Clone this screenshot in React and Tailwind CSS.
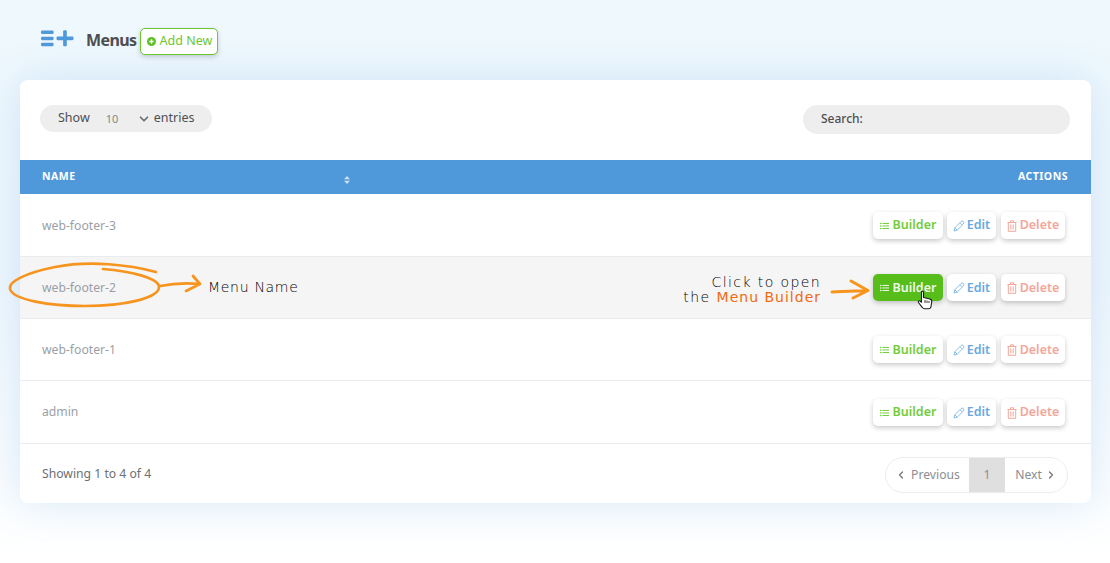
import React from "react";
import { ChevronDown, ChevronLeft, ChevronRight } from "lucide-react";

const ui = "font-['Noto_Sans',sans-serif]";

function ListIcon({ className }) {
  return (
    <svg viewBox="0 0 10 8" className={className} fill="currentColor">
      <rect x="0" y="0.5" width="1.6" height="1.4" />
      <rect x="0" y="3.3" width="1.6" height="1.4" />
      <rect x="0" y="6.1" width="1.6" height="1.4" />
      <rect x="2.6" y="0.6" width="7.4" height="1.1" />
      <rect x="2.6" y="3.4" width="7.4" height="1.1" />
      <rect x="2.6" y="6.2" width="7.4" height="1.1" />
    </svg>
  );
}

function PencilIcon() {
  return (
    <svg viewBox="0 0 12 12" className="w-[12px] h-[12px] text-[#7db8e8]" fill="none" stroke="currentColor" strokeWidth="0.9" strokeLinejoin="round">
      <path d="M1 11 L1.8 7.8 L8 1.6 A1.5 1.5 0 0 1 10.4 4 L4.2 10.2 Z" />
      <path d="M7 2.8 L9.2 5 M1.8 7.8 L4.2 10.2" />
    </svg>
  );
}

function TrashIcon() {
  return (
    <svg viewBox="0 0 10 12" className="w-[10px] h-[12px] text-[#f3a79a]" fill="none" stroke="currentColor" strokeWidth="1">
      <path d="M0.5 2.5 H9.5 M3.5 2.3 V0.8 H6.5 V2.3" />
      <path d="M1.3 2.6 V11.3 H8.7 V2.6" />
      <path d="M3.5 4.5 V9.5 M5 4.5 V9.5 M6.5 4.5 V9.5" strokeWidth="0.7" />
    </svg>
  );
}

function Actions({ active }) {
  const base = "h-[27px] pt-[1px] rounded-[5px] flex items-center justify-center text-[12.5px] font-semibold shadow-[0_2px_5px_rgba(0,0,0,0.22)]";
  return (
    <div className="flex items-center relative">
      <button className={`${base} w-[70px] gap-[4px] ${active ? "bg-[#56bd1a] text-[#eef9e6]" : "bg-white text-[#74cc3c]"}`}>
        <ListIcon className="w-[9px] h-[8px]" />
        Builder
      </button>
      <button className={`${base} ml-[4px] w-[49px] gap-[2px] bg-white text-[#69a9e0]`}>
        <PencilIcon />
        Edit
      </button>
      <button className={`${base} ml-[5px] w-[64px] gap-[3px] bg-white text-[#f3a79a] font-medium`}>
        <TrashIcon />
        Delete
      </button>
    </div>
  );
}

function Row({ name, hover, h, active, nudge = "translate-y-[1px]" }) {
  return (
    <div className={`flex items-center justify-between pl-[22px] pr-[26px] border-b border-[#e9ecef] ${h} ${hover ? "bg-[#f5f5f5]" : "bg-white"}`}>
      <span className={`text-[12.2px] text-[#9a9fa6] ${nudge}`}>{name}</span>
      <Actions active={active} />
    </div>
  );
}

export default function App() {
  return (
    <div className={`${ui} relative w-[1110px] h-[563px] overflow-hidden bg-gradient-to-b from-[#eef8fd] via-[#eef7fd] to-white`}>
      <header className="h-[80px] pl-[41px] pt-[28px] flex items-start">
        <svg viewBox="0 0 34 17" className="w-[33px] h-[17px] mt-[2px] text-[#4f98da]" fill="currentColor">
          <rect x="0" y="0.3" width="13" height="3.6" rx="1.2" />
          <rect x="0" y="6.6" width="13" height="3.6" rx="1.2" />
          <rect x="0" y="12.9" width="13" height="3.6" rx="1.2" />
          <rect x="16" y="6.4" width="17.5" height="3.8" rx="1.2" />
          <rect x="22.8" y="0" width="3.8" height="16.6" rx="1.2" />
        </svg>
        <h1 className="ml-[12px] h-[27px] leading-[25px] text-[16px] font-bold text-[#4d4f52] tracking-[-0.6px]">Menus</h1>
        <button className="ml-[4px] w-[78px] h-[27px] rounded-[5px] border border-[#6cc72f] bg-white text-[#6cc72f] text-[12.5px] flex items-center justify-center gap-[4px] shadow-[0_2px_5px_rgba(0,0,0,0.18)]">
          <svg viewBox="0 0 10 10" className="w-[9px] h-[9px]">
            <circle cx="5" cy="5" r="5" fill="#5fbf2a" />
            <path d="M5 2.6 V7.4 M2.6 5 H7.4" stroke="#fff" strokeWidth="1.4" />
          </svg>
          Add New
        </button>
      </header>

      <main className="ml-[20px] w-[1071px] h-[423px] bg-white rounded-[8px] overflow-hidden shadow-[0_0_40px_rgba(79,152,218,0.2)]">
        <div className="h-[80px] px-[20px] pt-[25px] flex items-start justify-between">
          <div className="w-[172px] h-[27px] rounded-full bg-[#eeeeee] flex items-center pl-[18px] text-[12.5px] text-[#4d4f52]">
            <span>Show</span>
            <span className="ml-[16px] w-[32px] text-[11px] text-[#85888c] translate-y-[1px]">10</span>
            <ChevronDown className="w-[14px] h-[14px] -ml-[1px] text-[#6b6e72]" strokeWidth={3} />
            <span className="ml-[3px]">entries</span>
          </div>
          <div className="w-[267px] h-[29px] mr-[1px] rounded-full bg-[#eeeeee] flex items-center pl-[18px] text-[12px] font-medium text-[#4d4f52]">
            <span className="-translate-y-[1px]">Search:</span>
          </div>
        </div>

        <div className="h-[34px] bg-[#4f98da] flex items-center pl-[22px] pr-[23px] text-white text-[10.5px] font-bold tracking-[0.5px]">
          <span className="w-[302px]">NAME</span>
          <svg viewBox="0 0 6 8" className="w-[6px] h-[8px] translate-y-[3px] text-[#cfe2f4]" fill="currentColor">
            <path d="M3 0 L6 3.2 H0 Z M3 8 L0 4.8 H6 Z" />
          </svg>
          <span className="ml-auto">ACTIONS</span>
        </div>

        <Row name="web-footer-3" h="h-[63px]" />
        <Row name="web-footer-2" h="h-[62px]" hover active />
        <Row name="web-footer-1" h="h-[62px]" />
        <Row name="admin" h="h-[63px]" nudge="translate-y-0" />

        <div className="h-[60px] pl-[22px] pr-[23px] flex items-center justify-between text-[12.2px] text-[#6c7075]">
          <span>Showing 1 to 4 of 4</span>
          <nav className="w-[183px] h-[36px] translate-y-[1px] rounded-full border border-[#ececec] overflow-hidden flex items-center text-[#8a8e93]">
            <span className="w-[83px] h-full flex items-center justify-center gap-[4px]">
              <ChevronLeft className="w-[12px] h-[12px] text-[#6c7075]" strokeWidth={2.4} />
              Previous
            </span>
            <span className="w-[36px] h-full bg-[#dfdfdf] flex items-center justify-center">1</span>
            <span className="flex-1 h-full flex items-center justify-center gap-[3px]">
              Next
              <ChevronRight className="w-[12px] h-[12px] text-[#6c7075]" strokeWidth={2.4} />
            </span>
          </nav>
        </div>
      </main>

      {/* hand-drawn annotations lying over the table */}
      <svg viewBox="0 0 1110 563" className="absolute inset-0 w-[1110px] h-[563px] pointer-events-none" fill="none" stroke="#f7941d" strokeLinecap="round" strokeLinejoin="round">
        <path strokeWidth="2.7" d="M156 272 C130 265 90 260 55 267 C25 273 8 282 10 289 C13 300 50 306 85 306 C125 306 159 298 159 287 C159 278 130 271 103 269" />
        <path strokeWidth="2.7" d="M160 286 C175 283 188 283 200 284 M193 276 L200 284 L186 291" />
        <path strokeWidth="3" d="M832 292 C845 291 857 291 868 290.5 M851 281 L868 290.5 L853 298" />
      </svg>
      <span className="absolute left-[208px] top-[277px] text-[14px] tracking-[0.7px] leading-[20px] text-black font-['DejaVu_Sans',sans-serif] font-extralight">Menu Name</span>
      <div className="absolute left-[660px] w-[161px] top-[275px] text-right text-[14px] leading-[15px] tracking-[1.4px] text-black font-['DejaVu_Sans',sans-serif] font-extralight">
        <div>Click to open</div>
        <div className="tracking-[1.5px]">the <span className="text-[#f26a10] font-normal tracking-[1px]">Menu Builder</span></div>
      </div>
      <svg viewBox="0 0 16 20" className="absolute left-[917px] top-[290px] w-[16px] h-[20px]">
        <path d="M4.5 1.5 C5.5 0.8 6.5 1.2 6.5 2.5 V7.5 L13 9 C14.5 9.5 15 10.5 14.7 12 L14 16.5 C13.8 18 13 18.8 11.5 18.8 H7.5 C6.5 18.8 5.8 18.2 5.2 17.3 L1.5 12.5 C0.8 11.5 1.8 10.3 3 11 L4.5 12.2 Z" fill="#fff" stroke="#1c1c1c" strokeWidth="1.1" strokeLinejoin="round" />
        <path d="M8 10 V13 M10 10.5 V13 M12 11 V13" stroke="#1c1c1c" strokeWidth="0.9" />
      </svg>
    </div>
  );
}
